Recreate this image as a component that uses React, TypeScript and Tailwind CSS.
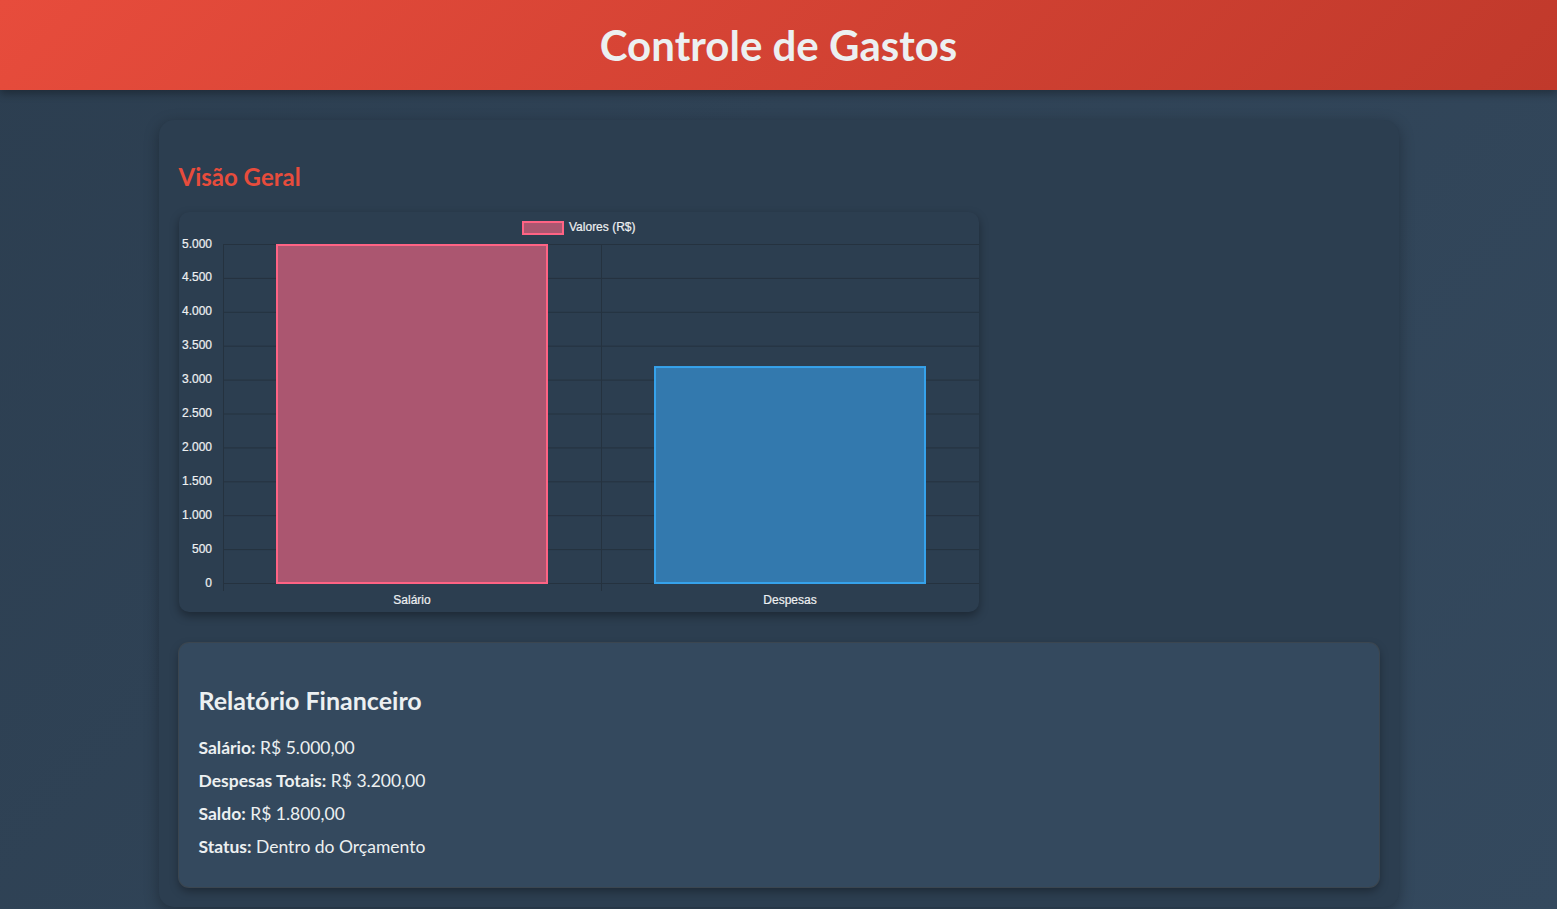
import React from 'react'

const ticks = [5000, 4500, 4000, 3500, 3000, 2500, 2000, 1500, 1000, 500, 0]
const fmt = (n: number) => n.toLocaleString('pt-BR')

function BarChart() {
     const top = 32
     const bottom = 371
     const left = 44
     const right = 800
     const yOf = (v: number) => bottom - (v / 5000) * (bottom - top)
     const bars = [
          { label: 'Salário', value: 5000, x: 97, fill: '#ab5670', stroke: '#ff6384' },
          { label: 'Despesas', value: 3200, x: 475, fill: '#3379ae', stroke: '#36a2eb' },
     ]
     return (
          <svg width={800} height={400} className="block" style={{ fontFamily: '"Liberation Sans", Arial, sans-serif' }}>
               {ticks.map((t) => (
                    <g key={t}>
                         <line x1={left} x2={right} y1={yOf(t) + 0.5} y2={yOf(t) + 0.5} stroke="#25323f" strokeWidth={1} />
                         <text x={33} y={yOf(t) + 3.5} textAnchor="end" fontSize={12} fill="#eef0f2" stroke="#eef0f2" strokeWidth={0.2}>{fmt(t)}</text>
                    </g>
               ))}
               {[left, 422].map((x) => (
                    <line key={x} x1={x + 0.5} x2={x + 0.5} y1={top} y2={bottom + 8} stroke="#25323f" strokeWidth={1} />
               ))}
               {bars.map((b) => (
                    <g key={b.label}>
                         <rect x={b.x + 1} y={yOf(b.value) + 1} width={270} height={bottom - yOf(b.value) - 1} fill={b.fill} stroke={b.stroke} strokeWidth={2} />
                         <text x={b.x + 136} y={392} textAnchor="middle" fontSize={12} fill="#eef0f2" stroke="#eef0f2" strokeWidth={0.2}>{b.label}</text>
                    </g>
               ))}
               <rect x={344} y={10} width={40} height={12} fill="#ab5670" stroke="#ff6384" strokeWidth={2} />
               <text x={390} y={19} fontSize={12} fill="#eef0f2" stroke="#eef0f2" strokeWidth={0.2}>Valores (R$)</text>
          </svg>
     )
}

export default function App() {
     return (
          <div className="min-h-screen bg-[linear-gradient(135deg,#2c3e50,#34495e)] text-[#ecf0f1]" style={{ fontFamily: 'Lato, "Open Sans", sans-serif' }}>
               <header className="h-[90px] flex items-center justify-center bg-[linear-gradient(135deg,#e74c3c,#c0392b)] shadow-[0_4px_8px_rgba(0,0,0,0.3)] relative">
                    <h1 className="text-[42px] font-bold text-[#ecf0f1] leading-none">Controle de Gastos</h1>
               </header>

               <main className="w-[1240px] mx-auto mt-[30px] bg-[#2c3e50] rounded-[15px] p-5 shadow-[0_4px_15px_rgba(0,0,0,0.3)]">
                    <h2 className="text-[24px] font-bold text-[#e74c3c] leading-8 mt-[21px] mb-[19px]">Visão Geral</h2>

                    <div className="w-[800px] h-[400px] bg-[#2c3e50] rounded-[10px] shadow-[0_4px_10px_rgba(0,0,0,0.35)]">
                         <BarChart />
                    </div>

                    <section className="mt-[31px] bg-[#34495e] rounded-[10px] px-5 pt-[21px] pb-5 shadow-[0_0_0_1px_#3b4650,0_4px_10px_rgba(0,0,0,0.35)]">
                         <h3 className="text-[25px] font-bold leading-8 mt-5">Relatório Financeiro</h3>
                         <div className="mt-[20px] flex flex-col gap-[9px] text-[17.5px] leading-6">
                              <p><strong>Salário:</strong> R$ 5.000,00</p>
                              <p><strong>Despesas Totais:</strong> R$ 3.200,00</p>
                              <p><strong>Saldo:</strong> R$ 1.800,00</p>
                              <p><strong>Status:</strong> Dentro do Orçamento</p>
                         </div>
                         <div className="h-[8px]" />
                    </section>
               </main>
          </div>
     )
}
